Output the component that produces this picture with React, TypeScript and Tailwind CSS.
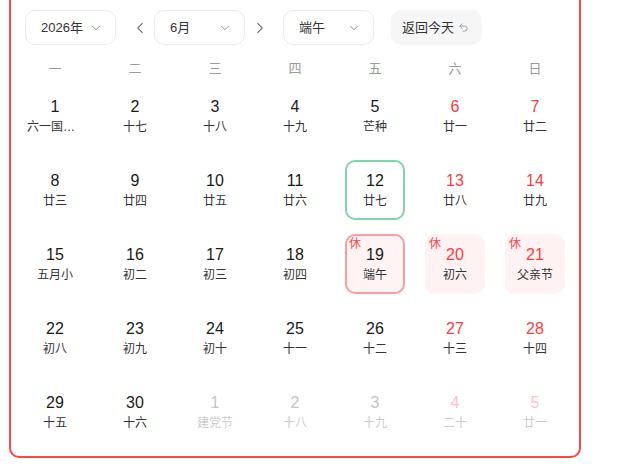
import { ChevronDown, ChevronLeft, ChevronRight, Undo2 } from 'lucide-react';

type Day = {
  d: number;
  lunar: string;
  weekend?: boolean;
  other?: boolean;
  today?: boolean;
  selected?: boolean;
  rest?: boolean;
  truncate?: boolean;
};

const weekdays = ['一', '二', '三', '四', '五', '六', '日'];

const days: Day[] = [
  { d: 1, lunar: '六一国际儿童节', truncate: true },
  { d: 2, lunar: '十七' },
  { d: 3, lunar: '十八' },
  { d: 4, lunar: '十九' },
  { d: 5, lunar: '芒种' },
  { d: 6, lunar: '廿一', weekend: true },
  { d: 7, lunar: '廿二', weekend: true },
  { d: 8, lunar: '廿三' },
  { d: 9, lunar: '廿四' },
  { d: 10, lunar: '廿五' },
  { d: 11, lunar: '廿六' },
  { d: 12, lunar: '廿七', today: true },
  { d: 13, lunar: '廿八', weekend: true },
  { d: 14, lunar: '廿九', weekend: true },
  { d: 15, lunar: '五月小' },
  { d: 16, lunar: '初二' },
  { d: 17, lunar: '初三' },
  { d: 18, lunar: '初四' },
  { d: 19, lunar: '端午', rest: true, selected: true },
  { d: 20, lunar: '初六', weekend: true, rest: true },
  { d: 21, lunar: '父亲节', weekend: true, rest: true },
  { d: 22, lunar: '初八' },
  { d: 23, lunar: '初九' },
  { d: 24, lunar: '初十' },
  { d: 25, lunar: '十一' },
  { d: 26, lunar: '十二' },
  { d: 27, lunar: '十三', weekend: true },
  { d: 28, lunar: '十四', weekend: true },
  { d: 29, lunar: '十五' },
  { d: 30, lunar: '十六' },
  { d: 1, lunar: '建党节', other: true },
  { d: 2, lunar: '十八', other: true },
  { d: 3, lunar: '十九', other: true },
  { d: 4, lunar: '二十', other: true, weekend: true },
  { d: 5, lunar: '廿一', other: true, weekend: true },
];

function Select({ label }: { label: string }) {
  return (
    <div className="flex h-[35px] w-[91px] items-center justify-between rounded-[10px] border border-[#ebebeb] bg-white pl-[15px] pr-[12px] text-[13px] text-[#333]">
      <span>{label}</span>
      <ChevronDown size={14} strokeWidth={1.6} className="text-[#888]" />
    </div>
  );
}

function Cell({ day }: { day: Day }) {
  let box = 'border-2 border-transparent';
  if (day.today) box = 'border-2 border-[#84d2aa]';
  else if (day.selected) box = 'border-2 border-[#fa9d9d] bg-[#fff3f3]';
  else if (day.rest) box = 'border-2 border-transparent bg-[#fff2f2]';

  let num = 'text-[#1a1a1a]';
  let sub = 'text-[#333]';
  if (day.other) {
    num = day.weekend ? 'text-[#ffc2c2]' : 'text-[#c4c4c4]';
    sub = 'text-[#cccccc]';
  } else if (day.weekend) {
    num = 'text-[#fa3c3c]';
  }

  return (
    <div className="flex justify-center">
      <div className={`relative flex h-[60px] w-[60px] flex-col items-center rounded-[10px] pt-[9px] ${box}`}>
        {day.rest && (
          <span className="absolute left-[2px] top-[0px] text-[12px] leading-[16px] text-[#f24848]">休</span>
        )}
        <div className={`text-[16px] leading-[20px] ${num}`}>{day.d}</div>
        {day.truncate ? (
          <div className={`mt-[2px] w-[56px] overflow-hidden text-ellipsis whitespace-nowrap text-[12px] leading-[16px] ${sub}`}>
            {day.lunar}
          </div>
        ) : (
          <div className={`mt-[2px] whitespace-nowrap text-[12px] leading-[16px] ${sub}`}>{day.lunar}</div>
        )}
      </div>
    </div>
  );
}

export default function App() {
  return (
    <div
      className="min-h-screen bg-white"
      style={{ fontFamily: '"Liberation Sans", "Noto Sans CJK SC", sans-serif' }}
    >
      <div className="ml-[9px] w-[572px] rounded-b-[10px] border-x-2 border-b-2 border-[#ff4545] px-[4px] pb-[14px] pt-[10px]">
        {/* toolbar */}
        <div className="flex items-center pl-[10px]">
          <Select label="2026年" />
          <div className="flex w-[38px] justify-center pl-[10px] text-[#777]">
            <ChevronLeft size={18} strokeWidth={1.5} />
          </div>
          <Select label="6月" />
          <div className="flex w-[38px] justify-center pr-[8px] text-[#777]">
            <ChevronRight size={18} strokeWidth={1.5} />
          </div>
          <Select label="端午" />
          <button className="ml-[17px] flex h-[35px] w-[91px] items-center gap-[4px] rounded-[10px] bg-[#f6f6f6] pl-[11px] text-[13px] text-[#333]">
            <span>返回今天</span>
            <Undo2 size={11} strokeWidth={2} className="text-[#999]" />
          </button>
        </div>

        {/* week header */}
        <div className="mt-[14px] grid grid-cols-7">
          {weekdays.map((w) => (
            <div key={w} className="text-center text-[13px] leading-[20px] text-[#9a9a9a]">
              {w}
            </div>
          ))}
        </div>

        {/* days */}
        <div className="mt-[7px] grid grid-cols-7 gap-y-[14px]">
          {days.map((day, i) => (
            <Cell key={i} day={day} />
          ))}
        </div>
      </div>
    </div>
  );
}
